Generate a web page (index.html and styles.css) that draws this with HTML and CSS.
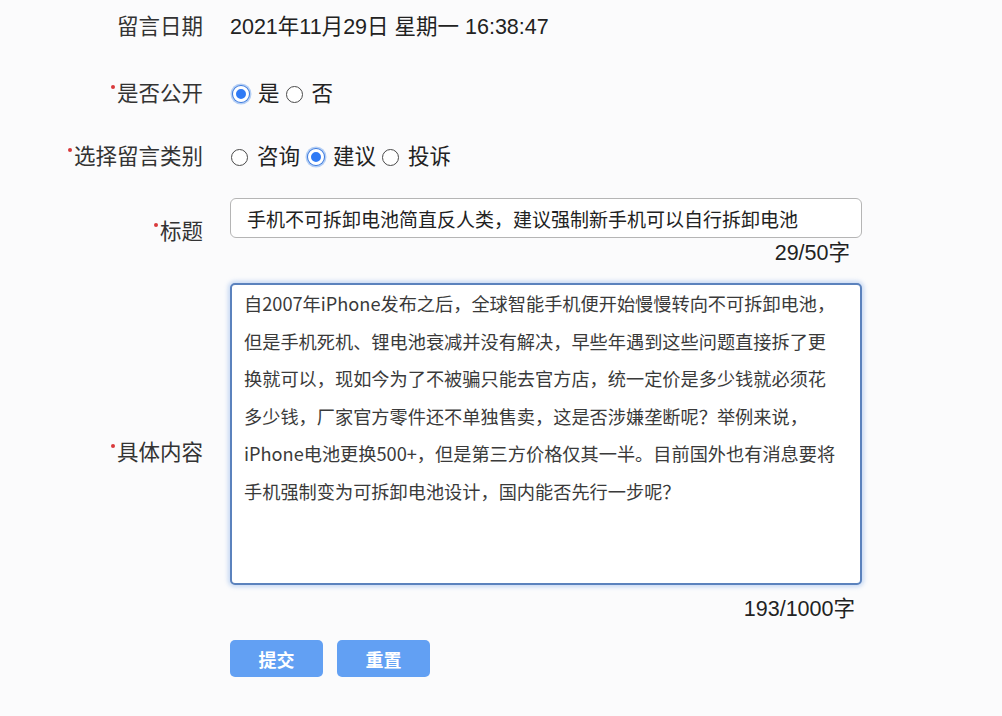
FILE: index.html
```html
<!DOCTYPE html>
<html lang="zh-CN">
<head>
    <meta charset="UTF-8">
    <meta name="viewport" content="width=device-width, initial-scale=1.0">
    <title>留言</title>
    <link rel="stylesheet" href="styles.css">
</head>
<body>
    <form class="msg-form">
        <div class="row row-date">
            <label class="label">留言日期</label>
            <div class="value">2021年11月29日 星期一 16:38:47</div>
        </div>
        <div class="row row-public">
            <label class="label required">是否公开</label>
            <div class="value radios">
                <span class="radio checked"></span><span class="opt">是</span>
                <span class="radio"></span><span class="opt">否</span>
            </div>
        </div>
        <div class="row row-type">
            <label class="label required">选择留言类别</label>
            <div class="value radios">
                <span class="radio"></span><span class="opt">咨询</span>
                <span class="radio checked"></span><span class="opt">建议</span>
                <span class="radio"></span><span class="opt">投诉</span>
            </div>
        </div>
        <div class="row row-title">
            <label class="label required">标题</label>
            <div class="value">
                <input class="title-input" type="text" value="手机不可拆卸电池简直反人类，建议强制新手机可以自行拆卸电池">
                <div class="counter counter-title">29/50字</div>
            </div>
        </div>
        <div class="row row-content">
            <label class="label required">具体内容</label>
            <div class="value">
                <textarea class="content-input">
自2007年iPhone发布之后，全球智能手机便开始慢慢转向不可拆卸电池，
但是手机死机、锂电池衰减并没有解决，早些年遇到这些问题直接拆了更
换就可以，现如今为了不被骗只能去官方店，统一定价是多少钱就必须花
多少钱，厂家官方零件还不单独售卖，这是否涉嫌垄断呢？举例来说，
iPhone电池更换500+，但是第三方价格仅其一半。目前国外也有消息要将
手机强制变为可拆卸电池设计，国内能否先行一步呢？</textarea>
                <div class="counter counter-content">193/1000字</div>
            </div>
        </div>
        <div class="row row-buttons">
            <div></div>
            <div class="value buttons">
                <button type="button" class="btn">提交</button>
                <button type="button" class="btn">重置</button>
            </div>
        </div>
    </form>
</body>
</html>
```

FILE: styles.css
```css
body {
    margin: 0;
    background-color: #fbfbfc;
    font-family: "Liberation Sans", "Noto Sans CJK SC", sans-serif;
    color: #222;
}
.msg-form {
    width: 1002px;
}
.row {
    display: grid;
    grid-template-columns: 203px 632px;
    column-gap: 27px;
    align-items: center;
}
.label {
    text-align: right;
    font-size: 21.5px;
    line-height: 30px;
    color: #333;
}
.required::before {
    content: "";
    display: inline-block;
    width: 4px;
    height: 4px;
    border-radius: 50%;
    background-color: #d9393b;
    vertical-align: top;
    margin-top: 6px;
    margin-right: 2px;
}
.value {
    font-size: 21.5px;
    line-height: 30px;
}
.row-date {
    height: 54px;
}
.row-public {
    height: 80px;
}
.row-type {
    height: 46px;
}
.radios {
    display: flex;
    align-items: center;
}
.radio {
    box-sizing: border-box;
    width: 17px;
    height: 17px;
    border-radius: 50%;
    border: 1.2px solid #4a4a4a;
    background-color: #fff;
    margin: 0 9px 0 1px;
}
.radio.checked {
    width: 16px;
    height: 16px;
    border: 3px solid #fff;
    background-color: #2f7af5;
    box-shadow: 0 0 0 1px #3d7ade, 0 0 0 2.5px #b5cff4;
    margin: 0 9px 0 3px;
}
.opt {
    margin-right: 5px;
}
.row-title {
    margin-top: 18px;
    align-items: start;
}
.row-title .label {
    padding-top: 19px;
}
.title-input {
    box-sizing: border-box;
    display: block;
    width: 632px;
    height: 40px;
    border: 1px solid #b5b5b5;
    border-radius: 6px;
    background-color: #fff;
    padding: 0 16px;
    font-family: "Liberation Sans", "Noto Sans CJK SC", sans-serif;
    font-size: 19px;
    color: #222;
    outline: none;
}
.counter {
    text-align: right;
    font-size: 21.5px;
    line-height: 30px;
    color: #222;
}
.counter-title {
    padding-right: 12px;
}
.row-content {
    margin-top: 15px;
    align-items: start;
}
.row-content .label {
    padding-top: 155px;
}
.content-input {
    box-sizing: border-box;
    display: block;
    width: 632px;
    height: 302px;
    border: 2px solid #5b82bd;
    border-radius: 5px;
    box-shadow: 0 0 4px 2px rgba(120, 165, 230, 0.4);
    background-color: #fff;
    padding: 0 12px;
    font-family: "Noto Sans CJK SC", "Liberation Sans", sans-serif;
    font-size: 18.2px;
    line-height: 37.6px;
    color: #3a3a3a;
    resize: none;
    overflow: hidden;
    white-space: pre;
    outline: none;
}
.counter-content {
    margin-top: 9px;
    padding-right: 7px;
}
.row-buttons {
    margin-top: 16px;
}
.buttons {
    display: flex;
    gap: 14px;
}
.btn {
    width: 93px;
    height: 37px;
    border: none;
    border-radius: 5px;
    background-color: #62a0f3;
    color: #fff;
    font-family: "Noto Sans CJK SC", sans-serif;
    font-size: 18px;
    font-weight: bold;
    cursor: pointer;
}
```
